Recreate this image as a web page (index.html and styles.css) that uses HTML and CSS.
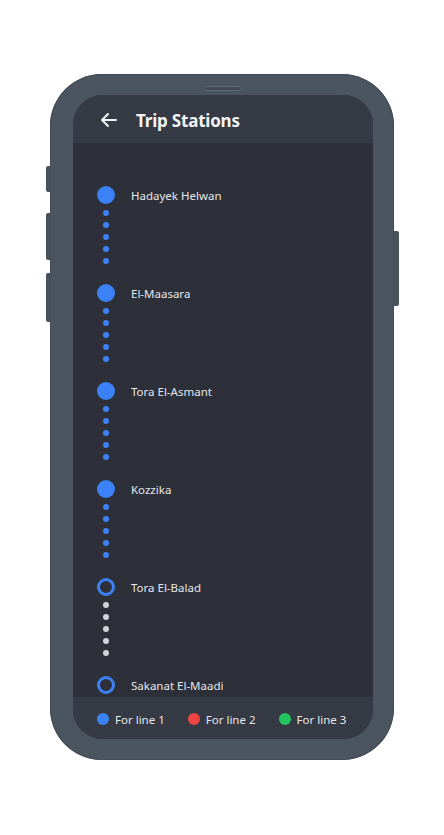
FILE: index.html
```html
<!DOCTYPE html>
<html lang="en">
<head>
    <meta charset="UTF-8">
    <meta name="viewport" content="width=device-width, initial-scale=1.0">
    <title>Trip Stations</title>
    <link rel="stylesheet" href="styles.css">
</head>
<body>
    <div class="phone">
        <span class="speaker"></span>
        <span class="side-btn btn-1"></span>
        <span class="side-btn btn-2"></span>
        <span class="side-btn btn-3"></span>
        <span class="side-btn btn-power"></span>

        <div class="screen">
            <header class="topbar">
                <svg class="back" width="18" height="16" viewBox="0 0 18 16" fill="none" stroke="#f3f4f6" stroke-width="2" stroke-linecap="round" stroke-linejoin="round">
                    <path d="M16 8H2M8 2L2 8l6 6"/>
                </svg>
                <h1>Trip Stations</h1>
            </header>

            <div class="stations">
                <div class="station">
                    <div class="row"><span class="dot"></span><span class="name">Hadayek Helwan</span></div>
                    <div class="track"><i></i><i></i><i></i><i></i><i></i></div>
                </div>
                <div class="station">
                    <div class="row"><span class="dot"></span><span class="name">El-Maasara</span></div>
                    <div class="track"><i></i><i></i><i></i><i></i><i></i></div>
                </div>
                <div class="station">
                    <div class="row"><span class="dot"></span><span class="name">Tora El-Asmant</span></div>
                    <div class="track"><i></i><i></i><i></i><i></i><i></i></div>
                </div>
                <div class="station">
                    <div class="row"><span class="dot"></span><span class="name">Kozzika</span></div>
                    <div class="track"><i></i><i></i><i></i><i></i><i></i></div>
                </div>
                <div class="station">
                    <div class="row"><span class="dot ring"></span><span class="name">Tora El-Balad</span></div>
                    <div class="track grey"><i></i><i></i><i></i><i></i><i></i></div>
                </div>
                <div class="station">
                    <div class="row"><span class="dot ring"></span><span class="name">Sakanat El-Maadi</span></div>
                    <div class="track grey"><i></i><i></i><i></i><i></i><i></i></div>
                </div>
            </div>

            <footer class="legend">
                <div class="key"><span class="swatch blue"></span>For line 1</div>
                <div class="key"><span class="swatch red"></span>For line 2</div>
                <div class="key"><span class="swatch green"></span>For line 3</div>
            </footer>
        </div>
    </div>
</body>
</html>
```

FILE: styles.css
```css
*{
    margin: 0;
    padding: 0;
    box-sizing: border-box;
}
body{
    width: 444px;
    height: 835px;
    background-color: #ffffff;
    font-family: "Noto Sans", "Open Sans", sans-serif;
    padding-top: 74px;
}
.phone{
    position: relative;
    width: 344px;
    height: 686px;
    margin: 0 auto;
    padding: 21px 21px 21px 23px;
    background-color: #4b555f;
    border-radius: 52px;
    box-shadow: inset 0 0 0 1px #434c56;
}
.speaker{
    position: absolute;
    top: 12px;
    left: 50%;
    width: 37px;
    height: 5px;
    margin-left: -18px;
    border-radius: 3px;
    background-color: #424a53;
    border: 1px solid #5d6772;
}
.side-btn{
    position: absolute;
    width: 4px;
    left: -4px;
    background-color: #49525c;
    border-radius: 2px 0 0 2px;
}
.btn-1{ top: 92px; height: 26px; }
.btn-2{ top: 139px; height: 47px; }
.btn-3{ top: 199px; height: 49px; }
.btn-power{
    left: auto;
    right: -5px;
    width: 5px;
    top: 157px;
    height: 75px;
    border-radius: 0 2px 2px 0;
}
.screen{
    height: 100%;
    display: flex;
    flex-direction: column;
    background-color: #2d3039;
    border-radius: 30px;
    overflow: hidden;
}
.topbar{
    height: 48px;
    flex-shrink: 0;
    display: flex;
    align-items: center;
    gap: 18px;
    padding: 2px 0 0 27px;
    background-color: #353a44;
}
.topbar h1{
    font-size: 17px;
    font-weight: 700;
    color: #f3f4f6;
    letter-spacing: -0.2px;
}
.stations{
    flex: 1;
    overflow: hidden;
    padding: 43px 0 0 24px;
}
.row{
    display: flex;
    align-items: center;
    gap: 16px;
    height: 18px;
}
.dot{
    width: 18px;
    height: 18px;
    border-radius: 50%;
    background-color: #3b82f6;
}
.dot.ring{
    background-color: transparent;
    border: 3px solid #3b82f6;
}
.name{
    font-size: 11.5px;
    color: #e5e7eb;
}
.track{
    width: 18px;
    display: flex;
    flex-direction: column;
    align-items: center;
    gap: 6px;
    padding: 6px 0 20px;
}
.track i{
    width: 6px;
    height: 6px;
    border-radius: 50%;
    background-color: #3b82f6;
}
.track.grey i{
    background-color: #d1d5db;
}
.legend{
    height: 42px;
    flex-shrink: 0;
    display: flex;
    align-items: center;
    gap: 23px;
    padding: 2px 0 0 24px;
    background-color: #353a44;
    font-size: 11.5px;
    color: #e5e7eb;
}
.key{
    display: flex;
    align-items: center;
    gap: 6px;
}
.swatch{
    width: 12px;
    height: 12px;
    border-radius: 50%;
}
.blue{ background-color: #3b82f6; }
.red{ background-color: #ef4444; }
.green{ background-color: #22c55e; }
```
